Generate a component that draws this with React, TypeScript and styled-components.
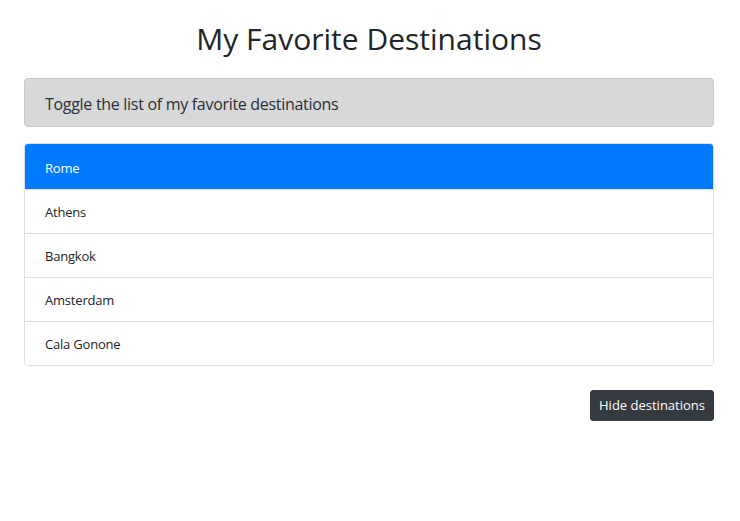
import React, { useState } from "react";
import styled, { createGlobalStyle } from "styled-components";

const Global = createGlobalStyle`
  html, body { margin: 0; padding: 0; background: #fff; }
  body {
    font-family: "Open Sans", "Noto Sans", "Liberation Sans", sans-serif;
    color: #212529;
  }
  * { box-sizing: border-box; }
`;

const Page = styled.div`
  width: 690px;
  margin: 0 0 0 24px;
  padding-top: 17px;
  display: flex;
  flex-direction: column;
`;

const Title = styled.h1`
  margin: 0 0 17px;
  font-size: 30px;
  font-weight: 400;
  line-height: 44px;
  text-align: center;
  letter-spacing: 0;
`;

const Banner = styled.div`
  background: #d6d8d9;
  border: 1px solid #c6c8ca;
  border-radius: 4px;
  padding: 14px 20px 10px;
  font-size: 16px;
  line-height: 23px;
  color: #2b2f33;
  letter-spacing: -0.3px;
  margin-bottom: 16px;
`;

const List = styled.ul`
  list-style: none;
  margin: 0 0 24px;
  padding: 0;
  border: 1px solid #dfdfdf;
  border-radius: 4px;
  overflow: hidden;
`;

const Item = styled.li<{ $active?: boolean }>`
  padding: 13px 20px 11px;
  font-size: 13px;
  line-height: 19px;
  letter-spacing: -0.2px;
  background: ${(p) => (p.$active ? "#007bff" : "#fff")};
  color: ${(p) => (p.$active ? "#fff" : "#212529")};
  border-top: 1px solid ${(p) => (p.$active ? "#007bff" : "#dfdfdf")};
  &:first-child { border-top: none; padding-top: 15px; padding-bottom: 11px; }
`;

const Footer = styled.div`
  display: flex;
  justify-content: flex-end;
`;

const Button = styled.button`
  font-family: inherit;
  font-size: 13px;
  line-height: 21px;
  letter-spacing: 0;
  padding: 4px 8px;
  background: #343a40;
  color: #fff;
  border: 1px solid #343a40;
  border-radius: 3px;
  cursor: pointer;
`;

const destinations = ["Rome", "Athens", "Bangkok", "Amsterdam", "Cala Gonone"];

export default function App() {
  const [show, setShow] = useState(true);
  return (
    <>
      <Global />
      <Page>
        <Title>My Favorite Destinations</Title>
        <Banner>Toggle the list of my favorite destinations</Banner>
        {show && (
          <List>
            {destinations.map((d, i) => (
              <Item key={d} $active={i === 0}>
                {d}
              </Item>
            ))}
          </List>
        )}
        <Footer>
          <Button onClick={() => setShow(!show)}>
            {show ? "Hide destinations" : "Show destinations"}
          </Button>
        </Footer>
      </Page>
    </>
  );
}
